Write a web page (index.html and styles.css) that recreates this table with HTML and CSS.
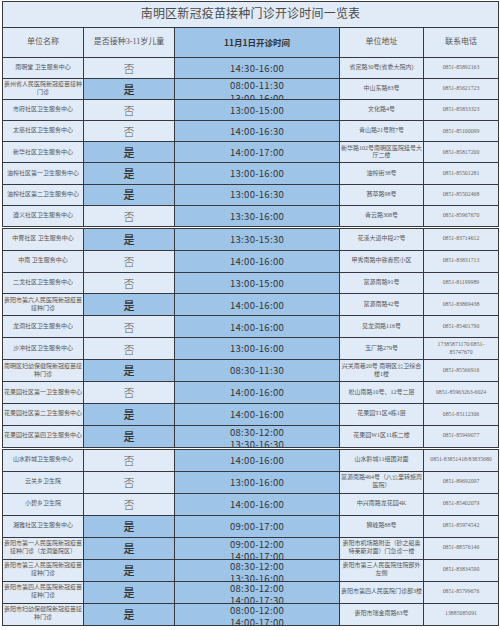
FILE: index.html
```html
<!DOCTYPE html>
<html lang="zh-CN">
<head>
<meta charset="utf-8">
<title>南明区新冠疫苗接种门诊开诊时间一览表</title>
<link rel="stylesheet" href="styles.css">
</head>
<body>
<div class="sheet">
  <div class="grid g1">
    <div class="title">南明区新冠疫苗接种门诊开诊时间一览表</div>
    <div class="hd">单位名称</div>
    <div class="hd">是否接种3-11岁儿童</div>
    <div class="hd hd-time">11月1日开诊时间</div>
    <div class="hd">单位地址</div>
    <div class="hd">联系电话</div>

    <div class="name">南明堂 卫生服务中心</div><div class="yn no">否</div><div class="time">14:30-16:00</div><div class="addr">省定路30号(省委大院内)</div><div class="tel">0851-85892163</div>
    <div class="name">贵州省人民医院新冠疫苗接种门诊</div><div class="yn yes">是</div><div class="time two"><span>08:00-11:30</span><span>13:00-16:00</span></div><div class="addr">中山东路83号</div><div class="tel">0851-85621723</div>
    <div class="name">市府社区卫生服务中心</div><div class="yn no">否</div><div class="time">13:00-15:00</div><div class="addr">文化路4号</div><div class="tel">0851-85833323</div>
    <div class="name">太慈社区卫生服务中心</div><div class="yn no">否</div><div class="time">14:00-16:30</div><div class="addr">青山路21号附7号</div><div class="tel">0851-85100099</div>
    <div class="name">新华社区卫生服务中心</div><div class="yn yes">是</div><div class="time">14:00-17:00</div><div class="addr">新华路102号南明区医院挂号大厅二楼</div><div class="tel">0851-85817200</div>
    <div class="name">油榨社区第一卫生服务中心</div><div class="yn yes">是</div><div class="time">13:00-16:00</div><div class="addr">油榨街38号</div><div class="tel">0851-85501281</div>
    <div class="name">油榨社区第二卫生服务中心</div><div class="yn yes">是</div><div class="time">13:00-16:30</div><div class="addr">赛草路98号</div><div class="tel">0851-85502468</div>
    <div class="name">遵义社区卫生服务中心</div><div class="yn no">否</div><div class="time">13:30-16:00</div><div class="addr">青云路308号</div><div class="tel">0851-85967670</div>
  </div>

  <div class="grid g2">
    <div class="name">中曹社区 卫生服务中心</div><div class="yn yes">是</div><div class="time">13:30-15:30</div><div class="addr">花溪大道中段27号</div><div class="tel">0851-83714612</div>
    <div class="name">中南 卫生服务中心</div><div class="yn no">否</div><div class="time">14:00-16:00</div><div class="addr">甲秀南路中铁春熙小区</div><div class="tel">0851-83831713</div>
    <div class="name">二戈社区卫生服务中心</div><div class="yn no">否</div><div class="time">13:00-15:00</div><div class="addr">富源南路91号</div><div class="tel">0851-81199989</div>
    <div class="name">贵阳市第六人民医院新冠疫苗接种门诊</div><div class="yn yes">是</div><div class="time">14:00-16:00</div><div class="addr">富源南路42号</div><div class="tel">0851-83869438</div>
    <div class="name">龙洞社区卫生服务中心</div><div class="yn no">否</div><div class="time">14:00-16:00</div><div class="addr">见龙洞路116号</div><div class="tel">0851-85401790</div>
    <div class="name">沙冲社区卫生服务中心</div><div class="yn no">否</div><div class="time">13:00-16:00</div><div class="addr">玉厂路279号</div><div class="tel">17385871170/0851-<br>85747670</div>
    <div class="name">南明区妇幼保健院新冠疫苗接种门诊</div><div class="yn yes">是</div><div class="time">08:30-11:30</div><div class="addr">兴关南巷20号 南明区公卫综合楼1楼</div><div class="tel">0851-85566916</div>
    <div class="name">花果园社区第一卫生服务中心</div><div class="yn no">否</div><div class="time">14:00-16:00</div><div class="addr">松山南路10号、12号二层</div><div class="tel">0851-85963263-6024</div>
    <div class="name">花果园社区第二卫生服务中心</div><div class="yn yes">是</div><div class="time">14:00-16:00</div><div class="addr">花果园T1区4栋1层</div><div class="tel">0851-85112306</div>
    <div class="name">花果园社区第四卫生服务中心</div><div class="yn yes">是</div><div class="time two"><span>08:30-12:00</span><span>13:30-16:30</span></div><div class="addr">花果园W1区11栋二楼</div><div class="tel">0851-85949077</div>
  </div>

  <div class="grid g3">
    <div class="name">山水黔城卫生服务中心</div><div class="yn no">否</div><div class="time">14:00-16:00</div><div class="addr">山水黔城11组团对面</div><div class="tel">0851-83851418/83835680</div>
    <div class="name">云关乡卫生院</div><div class="yn no">否</div><div class="time">13:00-16:00</div><div class="addr">富源南路464号（八公里转施周医院）</div><div class="tel">0851-89692097</div>
    <div class="name">小碧乡卫生院</div><div class="yn no">否</div><div class="time">14:00-16:00</div><div class="addr">中兴南路龙花园4K</div><div class="tel">0851-85402079</div>
    <div class="name">湘雅社区卫生服务中心</div><div class="yn yes">是</div><div class="time">09:00-17:00</div><div class="addr">狮峰路88号</div><div class="tel">0851-85974542</div>
    <div class="name">贵阳市第一人民医院新冠疫苗接种门诊（龙洞堡院区）</div><div class="yn yes">是</div><div class="time two"><span>09:00-12:00</span><span>14:00-17:00</span></div><div class="addr">贵阳市机场路附近（砂之船奥特莱斯对面）门急诊一楼</div><div class="tel">0851-88576146</div>
    <div class="name">贵阳市第三人民医院新冠疫苗接种门诊</div><div class="yn yes">是</div><div class="time two"><span>08:30-12:00</span><span>13:30-16:00</span></div><div class="addr">贵阳市第三人民医院住院部外左侧</div><div class="tel">0851-83834590</div>
    <div class="name">贵阳市第四人民医院新冠疫苗接种门诊</div><div class="yn yes">是</div><div class="time two"><span>08:30-12:00</span><span>14:00-17:30</span></div><div class="addr">贵阳市第四人民医院门诊部3楼</div><div class="tel">0851-85799676</div>
    <div class="name">贵阳市妇幼保健院新冠疫苗接种门诊</div><div class="yn yes">是</div><div class="time two"><span>08:00-12:00</span><span>14:00-17:00</span></div><div class="addr">贵阳市瑞金南路63号</div><div class="tel">13885085091</div>
  </div>
</div>
</body>
</html>
```

FILE: styles.css
```css
* { box-sizing: border-box; }
html, body { margin: 0; padding: 0; background: #fff; }

.sheet {
  width: 500px;
  padding: 1px 0 0 2px;
  font-family: "Liberation Serif", "Noto Sans CJK SC", serif;
  color: #555;
}

.grid {
  display: grid;
  grid-template-columns: 80px 90px 164px 83px 74px;
  gap: 1px;
  width: 497px;
  background: #363a40;
  border: 1px solid #363a40;
}
.g1 { grid-template-rows: 25px 29px; grid-auto-rows: 20.1px; }
.g2 { grid-auto-rows: 20.9px; margin-top: 1px; }
.g3 { grid-auto-rows: 21px; margin-top: 1px; }

.grid > div {
  background: #e1ebf7;
  display: flex;
  align-items: center;
  justify-content: center;
  text-align: center;
  overflow: hidden;
  line-height: 1.3;
}

.title {
  grid-column: 1 / -1;
  font-size: 12px;
  color: #4a4a4a;
  letter-spacing: 0.2px;
}

.hd { font-size: 8px; color: #555; }
.grid > .hd-time {
  background: #9ec4e7;
  font-family: "Noto Sans CJK SC", sans-serif;
  font-weight: 700;
  font-size: 8.5px;
  color: #333;
}

.name, .addr { font-size: 6px; color: #555; }
.tel { font-size: 5.8px; color: #666; }

.yn {
  font-family: "Noto Sans CJK SC", sans-serif;
  font-size: 11px;
}
.no { color: #5a5a5a; font-weight: 300; }
.grid > .yes { background: #9ec4e7; color: #333; font-weight: 500; }

.grid > .time {
  background: #9ec4e7;
  font-family: "Noto Sans CJK SC", sans-serif;
  font-size: 9.5px;
  color: #333;
  letter-spacing: 0.3px;
}
.grid > .time.two {
  flex-direction: column;
  justify-content: flex-start;
  line-height: 12.5px;
}
```
